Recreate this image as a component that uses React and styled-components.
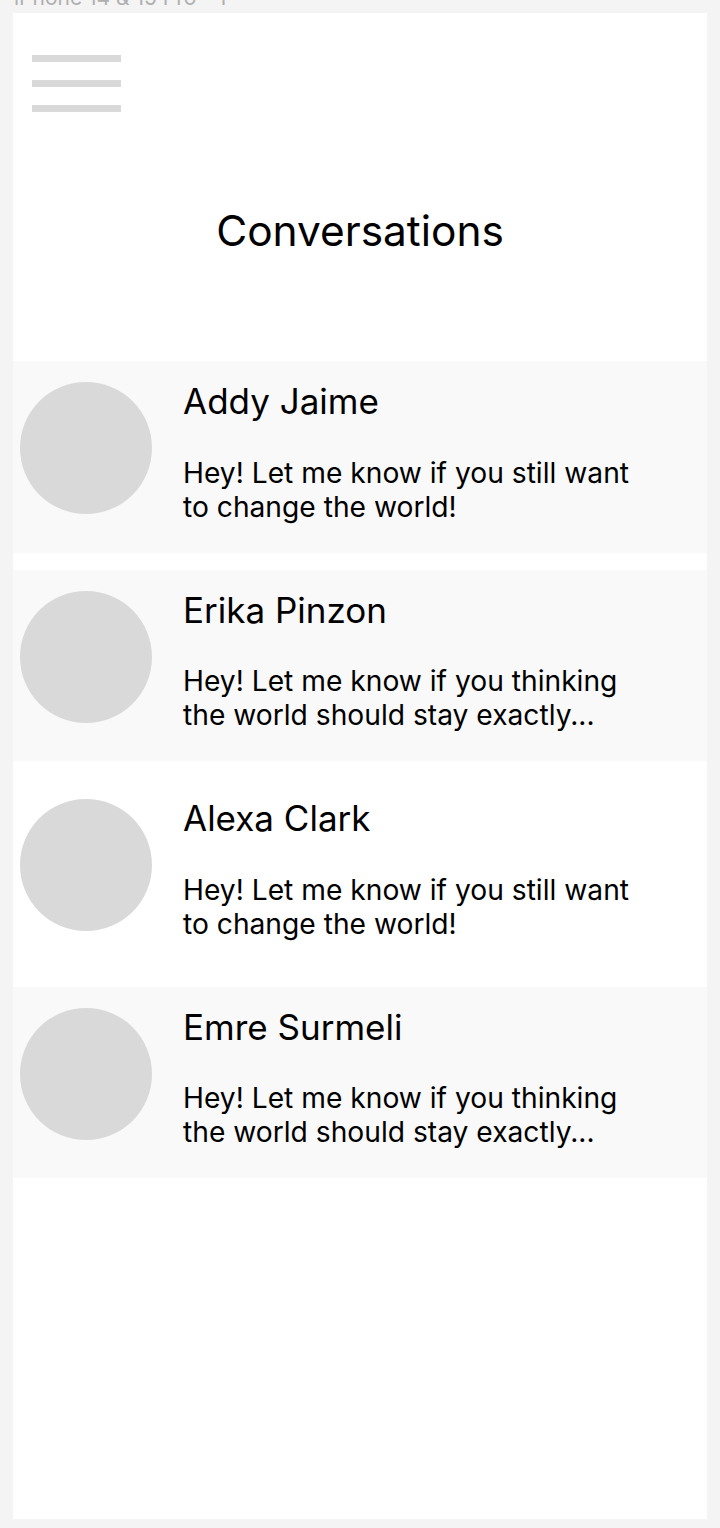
import React from "react";
import styled, { createGlobalStyle } from "styled-components";

const GlobalStyle = createGlobalStyle`
  html, body {
    margin: 0;
    padding: 0;
    background: #f4f4f4;
  }
  body {
    font-family: Inter, "Noto Sans", "Liberation Sans", sans-serif;
    overflow: hidden;
  }
`;

const Page = styled.div`
  width: 720px;
  height: 1528px;
  background: #f4f4f4;
  overflow: hidden;
`;

const FrameLabel = styled.div`
  margin: -14px 0 0 14px;
  height: 27px;
  font-size: 21px;
  line-height: 24px;
  color: #b0b0b0;
  white-space: nowrap;
`;

const Frame = styled.div`
  margin-left: 13px;
  width: 694px;
  height: 1506px;
  background: #ffffff;
  display: flex;
  flex-direction: column;
`;

const Header = styled.header`
  height: 348px;
  display: flex;
  flex-direction: column;
  padding-top: 42px;
  box-sizing: border-box;
`;

const Hamburger = styled.div`
  margin-left: 19px;
  width: 89px;
  display: flex;
  flex-direction: column;
  gap: 18px;
`;

const HamburgerLine = styled.span`
  display: block;
  height: 7px;
  background: #d9d9d9;
`;

const Title = styled.h1`
  margin: 93px 0 0;
  font-size: 42.4px;
  font-weight: 400;
  line-height: normal;
  color: #000;
  text-align: center;
`;

const List = styled.div`
  display: flex;
  flex-direction: column;
  gap: 17px;
`;

const Row = styled.div`
  height: 191.5px;
  display: flex;
  align-items: flex-start;
  padding: 21px 0 0 7px;
  box-sizing: border-box;
  background: ${(p) => (p.$plain ? "#ffffff" : "#f9f9f9")};
`;

const Avatar = styled.div`
  flex: none;
  width: 132px;
  height: 132px;
  border-radius: 50%;
  background: #d9d9d9;
`;

const Body = styled.div`
  margin: -2px 0 0 31px;
  display: flex;
  flex-direction: column;
`;

const Name = styled.div`
  font-size: 35px;
  line-height: normal;
  color: #000;
`;

const Message = styled.div`
  margin-top: 33.5px;
  width: 462px;
  font-size: 28.2px;
  line-height: 34px;
  color: #000;
`;

const conversations = [
  { name: "Addy Jaime", text: "Hey! Let me know if you still want to change the world!" },
  { name: "Erika Pinzon", text: "Hey! Let me know if you thinking the world should stay exactly..." },
  { name: "Alexa Clark", text: "Hey! Let me know if you still want to change the world!", plain: true },
  { name: "Emre Surmeli", text: "Hey! Let me know if you thinking the world should stay exactly..." },
];

export default function App() {
  return (
    <Page>
      <GlobalStyle />
      <FrameLabel>iPhone 14 &amp; 15 Pro - 1</FrameLabel>
      <Frame>
        <Header>
          <Hamburger>
            <HamburgerLine />
            <HamburgerLine />
            <HamburgerLine />
          </Hamburger>
          <Title>Conversations</Title>
        </Header>
        <List>
          {conversations.map((c) => (
            <Row key={c.name} $plain={c.plain}>
              <Avatar />
              <Body>
                <Name>{c.name}</Name>
                <Message>{c.text}</Message>
              </Body>
            </Row>
          ))}
        </List>
      </Frame>
    </Page>
  );
}
